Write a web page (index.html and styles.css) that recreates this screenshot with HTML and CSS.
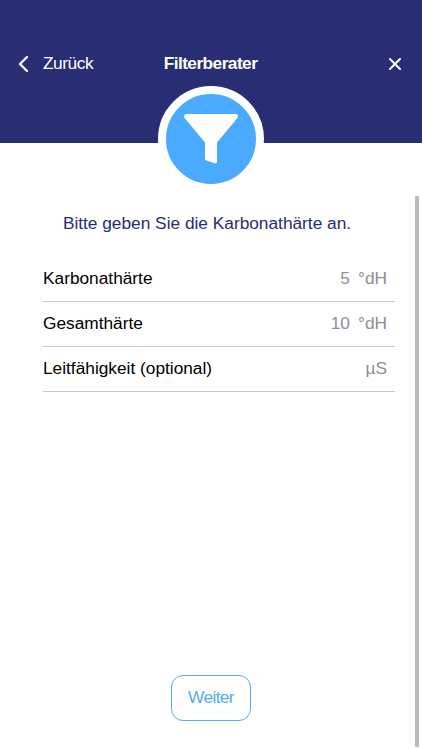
FILE: index.html
```html
<!DOCTYPE html>
<html lang="de">
<head>
<meta charset="utf-8">
<title>Filterberater</title>
<link rel="stylesheet" href="styles.css">
</head>
<body>
<header class="header">
  <nav class="bar">
    <a class="back"><svg width="10" height="18" viewBox="0 0 10 18"><path d="M9 2 2 9l7 7"/></svg><span>Zurück</span></a>
    <h1 class="title">Filterberater</h1>
    <a class="close"><svg width="12" height="12" viewBox="0 0 12 12"><path d="M1 1l10 10M11 1 1 11"/></svg></a>
  </nav>
  <div class="badge"><svg width="54" height="50" viewBox="0 0 54 50"><path d="M2.500 0h49c2.300 0 3.200 2.400 1.700 4.200L33 28.500V47.500c0 1.500-1 2.200-2.500 1.700l-8-2.600c-1-.4-1.500-1.200-1.500-2.300V28.500L.8 4.200C-.7 2.400.2 0 2.500 0Z"/></svg></div>
</header>
<main class="content">
  <p class="intro">Bitte geben Sie die Karbonathärte an.</p>
  <div class="row"><span>Karbonathärte</span><span class="value">5</span><span class="unit">°dH</span></div>
  <div class="row"><span>Gesamthärte</span><span class="value">10</span><span class="unit">°dH</span></div>
  <div class="row"><span>Leitfähigkeit (optional)</span><span class="value"></span><span class="unit">µS</span></div>
  <button class="next">Weiter</button>
  <div class="scrollbar"></div>
</main>
</body>
</html>
```
FILE: styles.css
```css
* { box-sizing: border-box; }
body { margin: 0; height: 750px; overflow: hidden; display: flex; flex-direction: column; background: #fff; font: 17.3px/20px "Liberation Sans", Arial, sans-serif; color: #000; }
.header { position: relative; flex: none; height: 143px; padding-top: 44px; background: #282d74; color: #fff; }
.bar { display: grid; grid-template-columns: 1fr auto 1fr; align-items: center; height: 40px; padding: 0 21px 0 18px; }
.back { display: flex; align-items: center; gap: 15px; letter-spacing: -.45px; }
.back span { margin-top: -2px; }
.back svg { margin-top: -1px; }
.title { margin: 0 -1px 2px 1px; font-size: 17.3px; line-height: 20px; letter-spacing: -.55px; }
.close { display: flex; justify-self: end; }
.bar svg { fill: none; stroke: #fff; stroke-width: 2; stroke-linecap: round; stroke-linejoin: round; }
.bar .back svg { stroke-width: 2.3; }
.badge { position: absolute; left: 158px; top: 86px; width: 106px; height: 106px; border: 8px solid #fff; border-radius: 50%; background: #49aaff; display: flex; justify-content: center; padding-top: 20px; }
.badge svg { fill: #fff; }
.content { position: relative; flex: 1; display: flex; flex-direction: column; padding: 70px 27px 29px 43px; }
.intro { margin: 0 0 24px; text-align: center; padding-right: 24px; color: #282d74; white-space: nowrap; }
.row { display: flex; align-items: center; height: 45px; padding-bottom: 2px; border-bottom: 1px solid #c8c7cc; }
.value { margin-left: auto; color: #8e8e98; }
.unit { margin: 0 8px; color: #8e8e98; }
.next { width: 80px; height: 46px; margin: auto auto 0 128px; border: 1px solid #55acef; border-radius: 12px; background: #fff; color: #55acef; font: inherit; letter-spacing: -.6px; padding: 0 0 2px; }
.scrollbar { position: absolute; right: 3px; top: 53px; bottom: 3px; width: 4px; border-radius: 1px; background: #bbb; }
```
